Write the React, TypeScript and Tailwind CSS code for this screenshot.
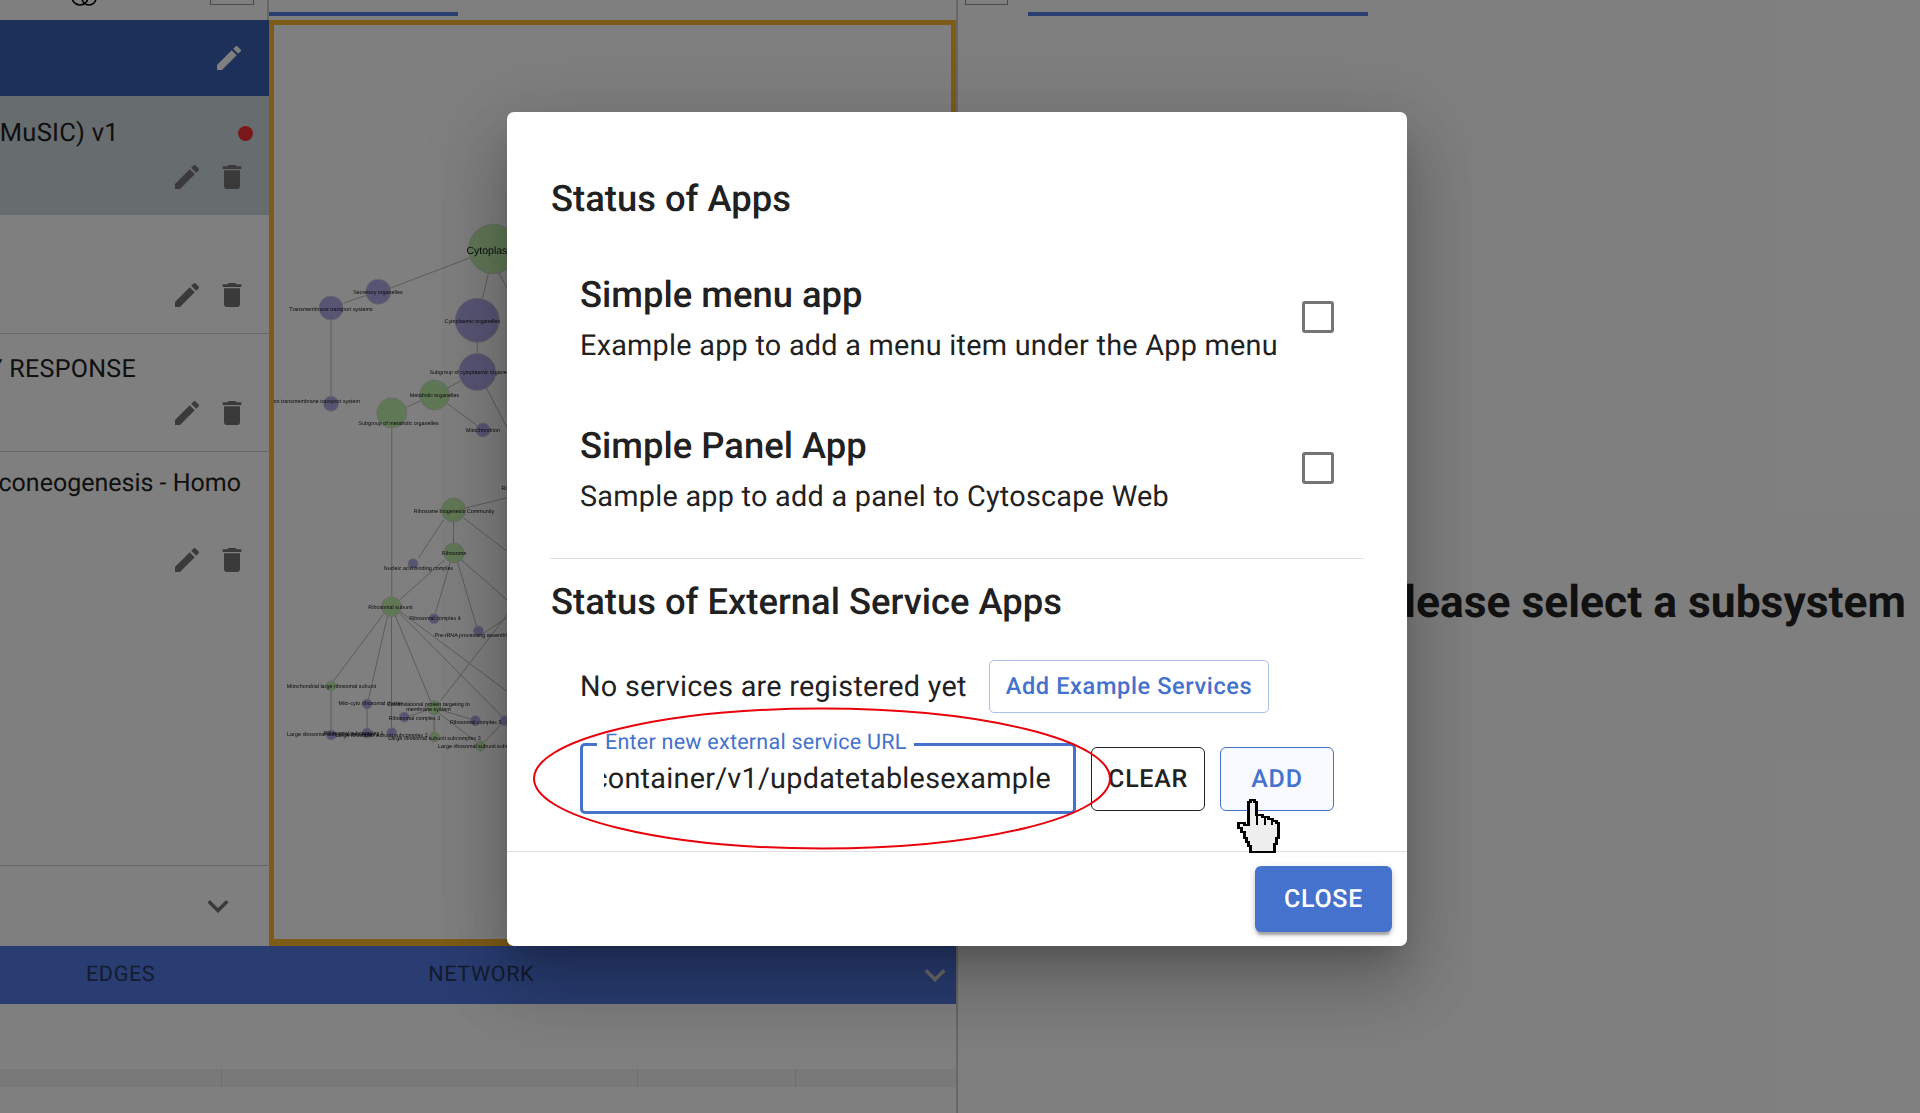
import React from "react";

const EDIT = "M3 17.25V21h3.75L17.81 9.94l-3.75-3.75L3 17.25zM20.71 7.04c.39-.39.39-1.02 0-1.41l-2.34-2.34c-.39-.39-1.02-.39-1.41 0l-1.83 1.83 3.75 3.75 1.83-1.83z";
const TRASH = "M6 19c0 1.1.9 2 2 2h8c1.1 0 2-.9 2-2V7H6v12zM19 4h-3.5l-1-1h-5l-1 1H5v2h14V4z";
const CHEVRON = "M16.59 8.59 12 13.17 7.41 8.59 6 10l6 6 6-6z";

function Icon({ d, className }: { d: string; className: string }) {
  return (
    <svg viewBox="0 0 24 24" className={className} fill="currentColor">
      <path d={d} />
    </svg>
  );
}

function Actions({ className }: { className: string }) {
  return (
    <div className={"flex justify-end gap-[13px] pr-[21px] text-[#757575] " + className}>
      <Icon d={EDIT} className="w-8 h-8" />
      <Icon d={TRASH} className="w-8 h-8" />
    </div>
  );
}

type N = { x: number; y: number; r: number; g?: boolean };
const nodes: N[] = [
  { x: 494.7, y: 249, r: 24.7, g: true },
  { x: 379.8, y: 291.7, r: 12.5 },
  { x: 332.5, y: 308, r: 12 },
  { x: 478.8, y: 320.3, r: 22 },
  { x: 478.8, y: 372, r: 18.5 },
  { x: 436, y: 395, r: 15, g: true },
  { x: 393.3, y: 413, r: 15, g: true },
  { x: 484.5, y: 430, r: 7 },
  { x: 332.5, y: 403.7, r: 7.5 },
  { x: 455, y: 510, r: 12, g: true },
  { x: 455.5, y: 553, r: 10, g: true },
  { x: 414.6, y: 563.7, r: 5 },
  { x: 393, y: 606.7, r: 10, g: true },
  { x: 435.5, y: 618.7, r: 5 },
  { x: 480, y: 631, r: 5 },
  { x: 332.5, y: 686, r: 5, g: true },
  { x: 368.6, y: 704, r: 5 },
  { x: 435.5, y: 707.7, r: 7, g: true },
  { x: 405.8, y: 717, r: 5 },
  { x: 476.8, y: 720.7, r: 5 },
  { x: 506.5, y: 720.7, r: 5 },
  { x: 332.8, y: 735, r: 5 },
  { x: 368.6, y: 733, r: 5 },
  { x: 393.3, y: 732.7, r: 5 },
  { x: 435.9, y: 737, r: 5, g: true },
  { x: 481.8, y: 746, r: 5, g: true },
];

const edges: [number, number, number, number][] = [
  [471, 258, 392, 288],
  [369, 295, 345, 303],
  [332.5, 320, 332.5, 396],
  [490, 273, 484, 298],
  [478.8, 342, 478.8, 353],
  [462, 381, 449, 388],
  [422, 401, 408, 407],
  [448, 403, 478, 425],
  [393.3, 428, 393.3, 596],
  [500, 272, 520, 310],
  [488, 388, 520, 450],
  [445, 520, 420, 558],
  [455, 522, 455, 543],
  [520, 495, 467, 508],
  [446, 560, 401, 600],
  [452, 562, 437, 613],
  [459, 562, 478, 626],
  [463, 560, 520, 610],
  [465, 518, 520, 560],
  [385, 614, 335, 681],
  [389, 616, 370, 699],
  [393, 617, 393, 728],
  [397, 616, 432, 701],
  [400, 612, 503, 716],
  [401, 611, 520, 700],
  [520, 610, 481, 636],
  [520, 600, 442, 701],
  [332.5, 691, 332.5, 730],
  [368.6, 709, 368.6, 728],
  [429, 710, 411, 716],
  [442, 710, 472, 719],
  [435.7, 715, 435.7, 732],
  [440, 713, 478, 742],
  [503, 724, 486, 742],
];

const labels: [number, number, number, string, boolean?][] = [
  [468, 254, 10.5, "Cytoplasmic", true],
  [379.5, 294, 5.4, "Secretory organelles"],
  [332.5, 310.5, 5.4, "Transmembrane transport systems"],
  [446, 322.5, 5.4, "Cytoplasmic organelles", true],
  [431, 374, 5.4, "Subgroup of cytoplasmic organelles", true],
  [436, 397, 5.4, "Metabolic organelles"],
  [400, 424.5, 5.4, "Subgroup of metabolic organelles"],
  [484.5, 432, 5.4, "Mitochondrion"],
  [317.5, 402.5, 5.4, "Ion transmembrane transport system"],
  [455.5, 512.5, 5.4, "Ribosome biogenesis Community"],
  [503, 490, 5.4, "Ribosome", true],
  [455.5, 555, 5.4, "Ribosome"],
  [420, 569.5, 5.4, "Nucleic acid binding complex"],
  [392, 608.5, 5.4, "Ribosomal subunit"],
  [436.5, 619.5, 5.4, "Ribosomal complex 4"],
  [436, 637, 5.4, "Pre-rRNA processing assembly (Ribosome)", true],
  [333, 688, 5.4, "Mitochondrial large ribosomal subunit"],
  [372, 705, 5.4, "Mito-cyto ribosomal cluster"],
  [430, 706, 5.4, "Cotranslational protein targeting to"],
  [430, 710.5, 5.4, "membrane system"],
  [416, 720, 5.4, "Ribosomal complex 3"],
  [451.4, 723.7, 5.4, "Ribosomal complex 5", true],
  [288.6, 735.5, 5.4, "Large ribosomal subunit subcomplex 1", true],
  [355, 735, 5.4, "Ribosomal subcomplex 1"],
  [383, 737, 5.4, "Large ribosomal subunit subcomplex 2"],
  [436, 739.5, 5.4, "Large ribosomal subunit subcomplex 3"],
  [439.6, 748, 5.4, "Large ribosomal subunit subcomplex 4", true],
];

function Graph() {
  return (
    <svg viewBox="275.5 25 677 914" className="w-full h-full blur-[0.7px]">
      {edges.map(([a, b, c, d], i) => (
        <line key={i} x1={a} y1={b} x2={c} y2={d} stroke="#b9b9b9" strokeWidth="1" />
      ))}
      {nodes.map((n, i) => (
        <circle key={i} cx={n.x} cy={n.y} r={n.r} fill={n.g ? "#c2f0ac" : "#aeaae8"} stroke="#d0d0d0" strokeWidth="0.8" />
      ))}
      {labels.map(([x, y, s, t, start], i) => (
        <text key={i} x={x} y={y} fontSize={s} textAnchor={start ? "start" : "middle"} fill="#111" fontFamily="Liberation Sans, sans-serif">
          {t}
        </text>
      ))}
    </svg>
  );
}

function Hand() {
  return (
    <svg viewBox="-2 -2 46 58" className="absolute left-[729px] top-[686px] w-[47px] h-[58px]" shapeRendering="crispEdges">
      <path
        d="M10 2h2V0h4v2h2v13h6v2h6v2h4v2h4v2h2v15h-2v6h-2v8H12v-6h-2v-4H8v-4H6v-6H3v-4H0v-5h6v2h4z"
        fill="#efeeee"
        stroke="#000"
        strokeWidth="2.4"
      />
      <path d="M18 14v11M26 17v8M33 20v5" stroke="#000" strokeWidth="2" fill="none" />
    </svg>
  );
}

function AppRow({ title, desc, className }: { title: string; desc: string; className: string }) {
  return (
    <div className={"flex items-center justify-between pl-[73px] pr-[73px] " + className}>
      <div>
        <div className="text-[36.4px] leading-[42px] font-medium text-[#212121]">{title}</div>
        <div className="text-[28.8px] leading-[42px] mt-[9px] text-[#212121] tracking-[0.26px]">{desc}</div>
      </div>
      <div className="w-8 h-8 mb-[7px] border-[3.5px] border-[#757575] rounded-[3px]" />
    </div>
  );
}

function Modal() {
  return (
    <div className="absolute left-[507px] top-[112px] w-[900px] h-[834px] bg-white rounded-[7px] flex flex-col shadow-[0_19px_26px_-12px_rgba(0,0,0,0.2),0_42px_66px_5px_rgba(0,0,0,0.14),0_16px_80px_14px_rgba(0,0,0,0.12)]">
      <h2 className="ml-[44px] mt-[66px] text-[36.4px] leading-[42px] font-medium text-[#212121]">Status of Apps</h2>
      <AppRow className="mt-[54px]" title="Simple menu app" desc="Example app to add a menu item under the App menu" />
      <AppRow className="mt-[58px]" title="Simple Panel App" desc="Sample app to add a panel to Cytoscape Web" />
      <div className="mx-[43px] mt-[40px] h-px bg-[#e0e0e0]" />
      <h2 className="ml-[44px] mt-[22px] text-[36.4px] leading-[42px] font-medium text-[#212121]">Status of External Service Apps</h2>
      <div className="flex items-center pl-[73px] mt-[37px] h-[53px]">
        <span className="pt-[2px] text-[28.8px] text-[#212121] tracking-[0.26px]">No services are registered yet</span>
        <div className="ml-auto mr-[138px] w-[280px] h-[53px] border border-[#a9c0ea] rounded-[5px] flex items-center justify-center text-[23.6px] font-medium text-[#4472cc] tracking-[0.6px]">
          Add Example Services
        </div>
      </div>
      <div className="flex items-center pl-[73px] mt-[30px] relative">
        <div className="w-[496px] h-[71px] pt-[2px] border-[3px] border-[#4472cc] rounded-[5px] flex justify-end items-center overflow-hidden px-[22px] text-[28.8px] text-[#212121] tracking-[0.26px] whitespace-nowrap">
          <div className="w-[447px] flex justify-end overflow-hidden shrink-0">
            <span>http://localhost/container/v1/updatetablesexample</span>
          </div>
        </div>
        <div className="absolute left-[90px] -top-[13px] px-[8px] bg-white text-[21.6px] leading-[26px] text-[#4472cc] tracking-[0.2px] whitespace-nowrap">
          Enter new external service URL
        </div>
        <div className="ml-[15px] w-[114px] h-16 pt-[2px] border border-[#222] rounded-[6px] flex items-center justify-center text-[25px] font-medium text-[#212121] tracking-[0.7px]">
          CLEAR
        </div>
        <div className="ml-[15px] w-[114px] h-16 pt-[2px] border border-[#4472cc] bg-[#f8faff] rounded-[6px] flex items-center justify-center text-[25px] font-medium text-[#4472cc] tracking-[0.7px]">
          ADD
        </div>
      </div>
      <div className="mt-[37px] border-t border-[#e0e0e0] flex justify-end pt-[14px] pr-[15px]">
        <div className="w-[137px] h-[66px] pt-[2px] bg-[#4472cc] rounded-[6px] flex items-center justify-center text-[25px] font-medium text-white tracking-[0.7px] shadow-[0_5px_2px_-2px_rgba(0,0,0,0.2),0_3px_4px_0_rgba(0,0,0,0.14),0_2px_8px_0_rgba(0,0,0,0.12)]">
          CLOSE
        </div>
      </div>
      <svg viewBox="0 0 578 141" className="absolute left-[26px] top-[596px] w-[578px] h-[141px] overflow-visible" fill="none">
        <ellipse cx="289" cy="70.5" rx="288" ry="70" stroke="#e8000b" strokeWidth="2" />
      </svg>
      <Hand />
    </div>
  );
}

function Sidebar() {
  return (
    <div className="w-[269px] shrink-0 flex flex-col bg-white">
      <div className="h-5 flex border-r-2 border-[#cfcfcf] relative overflow-hidden">
        <svg viewBox="0 0 30 6" className="ml-[70px] w-[30px] h-[6px]" fill="none" stroke="#000" strokeWidth="1.6">
          <circle cx="10" cy="-3" r="8" />
          <circle cx="19" cy="-2" r="7" />
        </svg>
        <div className="ml-[110px] w-[44px] h-[5px] border-x border-b border-[#999]" />
      </div>
      <div className="h-[76px] bg-[#3860b2] flex items-center justify-end pr-[24px] text-white">
        <Icon d={EDIT} className="w-8 h-8" />
      </div>
      <div className="h-[119px] bg-[#ced8de] flex flex-col">
        <div className="flex justify-end items-center pr-[150px] overflow-hidden whitespace-nowrap text-[25.5px] leading-[30px] text-[#212121] mt-[22px] tracking-[0.3px]">
          <span>Multiscale Integrated Cell (MuSIC) v1</span>
        </div>
        <Actions className="mt-[13px]" />
        <div className="absolute left-[238px] top-[126px] w-[15px] h-[15px] rounded-full bg-[#f23030]" />
      </div>
      <div className="h-[119px] border-b border-[#cccccc] flex flex-col justify-end pb-[22px]">
        <Actions className="" />
      </div>
      <div className="h-[118px] border-b border-[#cccccc] flex flex-col">
        <div className="flex justify-end pr-[133px] overflow-hidden whitespace-nowrap text-[25px] leading-[30px] text-[#212121] mt-[21px] tracking-[0.3px]">
          <span>AUTOPHAGY RESPONSE</span>
        </div>
        <Actions className="mt-[12px]" />
      </div>
      <div className="flex-1 flex flex-col min-h-0">
        <div className="flex justify-end pr-[28px] overflow-hidden whitespace-nowrap text-[25px] leading-[30px] text-[#212121] mt-[17px]">
          <span>Gluconeogenesis - Homo</span>
        </div>
        <Actions className="mt-[45px]" />
      </div>
      <div className="h-[81px] border-t border-[#cccccc] flex items-center justify-end pr-[30px] text-[#757575]">
        <Icon d={CHEVRON} className="w-[42px] h-[42px]" />
      </div>
    </div>
  );
}

export default function App() {
  return (
    <div className="relative w-[1920px] h-[1113px] overflow-hidden bg-white flex [font-family:Roboto,sans-serif] [text-rendering:geometricPrecision]">
      <div className="w-[958px] shrink-0 flex flex-col border-r-2 border-[#cfcfcf]">
        <div className="h-[946px] flex">
          <Sidebar />
          <div className="flex-1 flex flex-col min-w-0">
            <div className="h-5 pt-[12px]">
              <div className="w-[189px] h-1 bg-[#547ce4]" />
            </div>
            <div className="flex-1 min-h-0 border-solid border-[#fab82e] border-t-[5px] border-l-[5px] border-r-[5px] border-b-[7px] bg-white">
              <Graph />
            </div>
          </div>
        </div>
        <div className="h-[58px] bg-[#527ae4] flex items-center relative">
          <span className="ml-[86px] text-[21.6px] tracking-[0.6px] text-[#28385f]">EDGES</span>
          <span className="ml-[273px] text-[21.6px] tracking-[0.6px] text-[#28385f]">NETWORK</span>
          <Icon d={CHEVRON} className="ml-auto mr-[0px] w-[42px] h-[42px] text-[#d8d8d8]" />
        </div>
        <div className="flex-1 flex flex-col justify-end pb-[26px]">
          <div className="h-[18px] bg-[#f2f2f2] flex">
            <div className="w-[222px] border-r border-[#dddddd]" />
            <div className="w-[416px] border-r border-[#dddddd]" />
            <div className="w-[158px] border-r border-[#dddddd]" />
          </div>
        </div>
      </div>
      <div className="flex-1 flex flex-col min-w-0">
        <div className="h-5 pt-[12px] flex">
          <div className="ml-[70px] w-[340px] h-1 bg-[#547ce4]" />
        </div>
        <div className="flex justify-end pr-[14px] mt-[557px] whitespace-nowrap text-[44.4px] leading-[50px] font-bold text-[#222]">
          Please select a subsystem
        </div>
      </div>
      <div className="absolute left-[965px] top-0 w-[43px] h-[5px] border-x border-b border-[#999]" />
      <div className="absolute inset-0 bg-black/50" />
      <Modal />
    </div>
  );
}
